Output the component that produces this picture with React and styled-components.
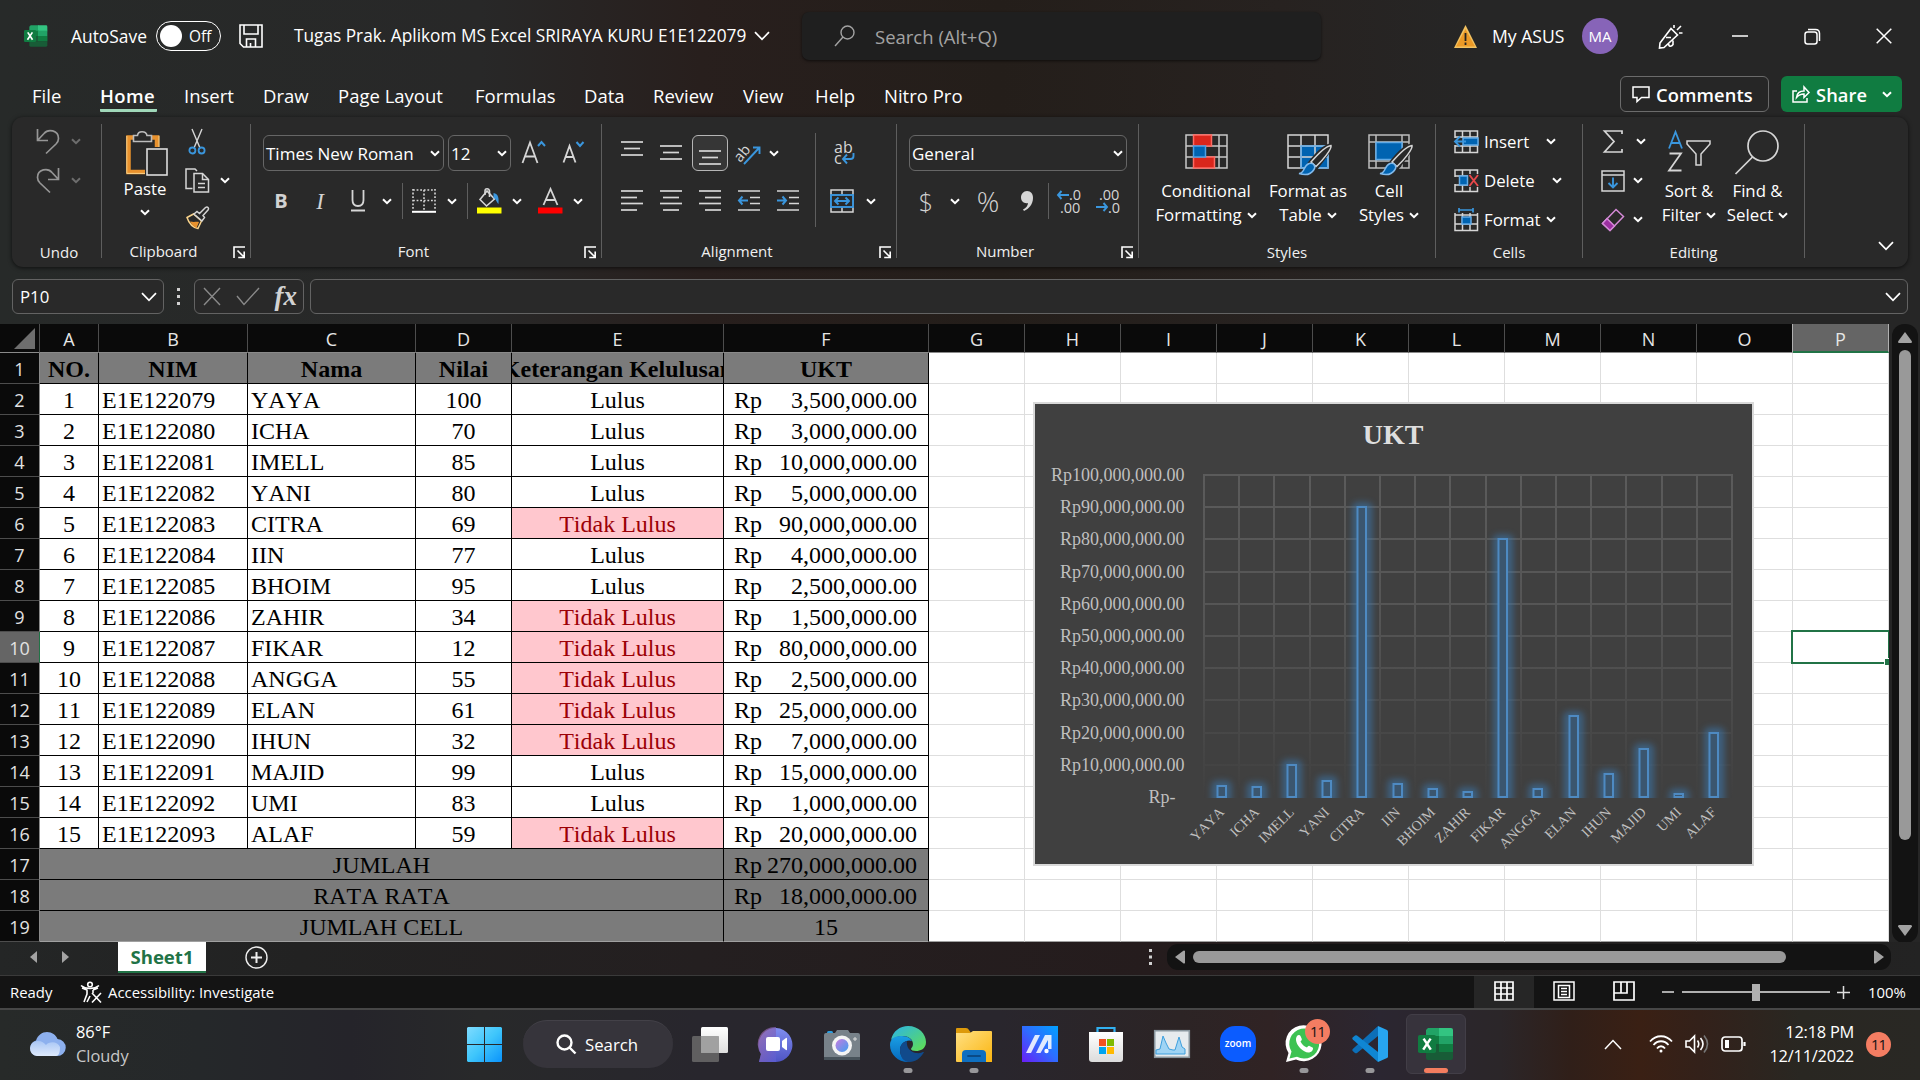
import React from "react";
import styled, { createGlobalStyle, css } from "styled-components";

const UI = `"Open Sans", "Noto Sans", sans-serif`;
const SERIF = `"Liberation Serif", "Times New Roman", serif`;

const Global = createGlobalStyle`
  html, body { margin: 0; padding: 0; background: #202020; }
  * { box-sizing: border-box; }
  svg { display: block; flex: none; overflow: visible; }
`;

const Screen = styled.div`
  width: 1920px;
  height: 1080px;
  overflow: hidden;
  display: flex;
  flex-direction: column;
  font-family: ${UI};
  font-size: 16.8px;
  color: #fff;
  background: linear-gradient(90deg, #272a29 0, #282828 480px, #281f1d 700px, #241e1a 1000px, #272220 1280px, #262626 1480px, #262626 100%);
`;

/* ---------- title bar ---------- */
const TitleBar = styled.header`
  height: 72px;
  display: flex;
  align-items: center;
  flex: none;
  white-space: nowrap;
`;
const Slot = styled.div`
  width: ${(p) => p.$w}px;
  height: ${(p) => (p.$h ? p.$h + "px" : "100%")};
  margin-left: ${(p) => p.$ml || 0}px;
  flex: none;
  display: flex;
  align-items: center;
  justify-content: ${(p) => (p.$start ? "flex-start" : "center")};
  white-space: nowrap;
`;
const TitleText = styled.div`
  width: ${(p) => p.$w}px;
  flex: none;
  font-size: ${(p) => p.$size || 17.25}px;
  line-height: 24px;
`;
const Toggle = styled.div`
  width: 65px;
  height: 30px;
  margin-left: 9px;
  border: 1.5px solid #fff;
  border-radius: 15px;
  display: flex;
  align-items: center;
  gap: 7px;
  padding-left: 3px;
  font-size: 15.4px;
`;
const Knob = styled.span`
  width: 22px;
  height: 22px;
  border-radius: 50%;
  background: #fff;
`;
const SearchBox = styled.div`
  width: 519px;
  height: 48px;
  margin-left: 32px;
  border-radius: 7px;
  background: #1f1f1f;
  box-shadow: 0 1px 3px rgba(0, 0, 0, 0.6);
  display: flex;
  align-items: center;
  padding-left: 32px;
  gap: 20px;
  font-size: 18.5px;
  color: #a3a3a3;
`;
const Avatar = styled.div`
  width: 36px;
  height: 36px;
  border-radius: 50%;
  background: #8764b8;
  display: flex;
  align-items: center;
  justify-content: center;
  font-size: 15px;
`;

/* ---------- tabs ---------- */
const TabRow = styled.nav`
  height: 45px;
  flex: none;
  display: flex;
  padding: 4px 18px 0 32px;
`;
const Tab = styled.div`
  width: ${(p) => p.$w}px;
  font-size: 18.5px;
  line-height: 40px;
  white-space: nowrap;
  ${(p) =>
    p.$active &&
    css`
      font-weight: 600;
      letter-spacing: 0.4px;
      span {
        display: block;
        width: 57px;
        height: 36px;
        border-bottom: 3px solid #a0d8b9;
        border-radius: 1px;
      }
    `}
`;
const Grow = styled.div`
  flex: 1;
`;
const CommentsButton = styled.button`
  width: 149px;
  height: 36px;
  border: 1px solid #6b6b6b;
  border-radius: 6px;
  background: transparent;
  color: #fff;
  font: 600 18.3px ${UI};
  letter-spacing: 0.1px;
  padding: 0 0 0 11px;
  display: flex;
  align-items: center;
  gap: 6px;
  white-space: nowrap;
`;
const ShareButton = styled(CommentsButton)`
  width: 121px;
  margin-left: 12px;
  border: 0;
  background: #107c41;
`;

/* ---------- ribbon ---------- */
const Ribbon = styled.section`
  height: 150px;
  margin: 0 12px;
  flex: none;
  display: flex;
  background: #292929;
  border-radius: 11px;
  box-shadow: 0 1px 4px rgba(0, 0, 0, 0.65);
`;
const Group = styled.div`
  width: ${(p) => p.$w}px;
  flex: none;
  display: flex;
  flex-direction: column;
`;
const Body = styled.div`
  height: 122px;
  display: flex;
  padding-left: ${(p) => p.$pl || 0}px;
`;
const Stack = styled.div`
  display: flex;
  flex-direction: column;
  flex: none;
  width: ${(p) => (p.$w ? p.$w + "px" : "auto")};
  padding-top: ${(p) => p.$pt || 0}px;
`;
const Line = styled.div`
  display: flex;
  align-items: center;
  height: ${(p) => p.$h || 39}px;
  margin-top: ${(p) => p.$mt || 0}px;
  padding-left: ${(p) => p.$pl || 0}px;
  gap: ${(p) => p.$gap || 0}px;
`;
const Caption = styled.div`
  height: 26px;
  display: flex;
  align-items: center;
  font-size: 15px;
  color: #f0f0f0;
  > span {
    flex: 1;
    text-align: center;
    padding-left: ${(p) => p.$pl || 0}px;
    padding-bottom: ${(p) => (p.$up ? 2 : 0)}px;
  }
`;
const LauncherSlot = styled.div`
  width: 25px;
  padding-left: 8px;
`;
const Divider = styled.div`
  width: 1px;
  height: 134px;
  margin-top: 7px;
  background: #5e5e5e;
  flex: none;
`;
const Bar = styled.i`
  width: 1px;
  height: ${(p) => p.$h}px;
  margin-top: ${(p) => p.$mt || 0}px;
  background: #5e5e5e;
`;
const Combo = styled.div`
  width: ${(p) => p.$w}px;
  height: 36px;
  border: 1px solid #666;
  border-radius: 6px;
  display: flex;
  align-items: center;
  justify-content: space-between;
  padding: 0 3px 0 2px;
  font-size: 17px;
`;
const BigButton = styled.div`
  width: ${(p) => p.$w}px;
  padding-top: ${(p) => p.$pt || 17}px;
  display: flex;
  flex-direction: column;
  align-items: center;
  line-height: 24px;
  white-space: nowrap;
`;
const IconBox = styled.div`
  height: 41px;
  margin-bottom: 4px;
  padding-left: ${(p) => p.$pl || 0}px;
`;
const TextRow = styled.div`
  display: flex;
  align-items: center;
  gap: 5px;
`;
const Pressed = styled.div`
  width: 36px;
  height: 36px;
  border: 1.3px solid #b5b5b5;
  border-radius: 6px;
  background: #363636;
  display: flex;
  align-items: center;
  justify-content: center;
  padding-top: 10px;
`;
const Glyph = styled.span`
  font-size: ${(p) => p.$s || 20}px;
  color: #d2d2d2;
  line-height: 1;
  font-weight: ${(p) => p.$b || 400};
  font-style: ${(p) => (p.$i ? "italic" : "normal")};
  font-family: ${(p) => (p.$serif ? SERIF : UI)};
`;

/* ---------- formula bar ---------- */
const FormulaBar = styled.div`
  height: 57px;
  flex: none;
  display: flex;
  align-items: flex-start;
  padding: 12px 12px 0 12px;
`;
const Field = styled.div`
  width: ${(p) => (p.$w ? p.$w + "px" : "auto")};
  flex: ${(p) => (p.$w ? "none" : 1)};
  height: 35px;
  border: 1px solid #636363;
  border-radius: 6px;
  background: #292929;
  display: flex;
  align-items: center;
  justify-content: space-between;
  padding: 0 6px 0 7px;
  font-size: 16.8px;
`;

/* ---------- sheet ---------- */
const COLS = "40px 59px 149px 168px 96px 212px 205px repeat(10, 96px)";
const Workbook = styled.main`
  display: flex;
  height: 618px;
  flex: none;
`;
const Sheet = styled.div`
  width: 1889px;
  position: relative;
  background: #fff;
`;
const HeadRow = styled.div`
  display: grid;
  grid-template-columns: ${COLS};
  grid-template-rows: 29px;
  height: 29px;
`;
const ColHead = styled.div`
  height: 29px;
  background: ${(p) => (p.$sel ? "#656565" : "#0a0a0a")};
  border-right: 1px solid ${(p) => (p.$edge ? "#b0b0b0" : "#4d4d4d")};
  border-bottom: ${(p) => (p.$sel ? "2px solid #217346" : "1px solid #8a8a8a")};
  padding-top: 2px;
  font-size: 18px;
  line-height: 26px;
  text-align: center;
  color: #e6e6e6;
`;
const Corner = styled(ColHead)`
  display: flex;
  justify-content: flex-end;
  align-items: flex-end;
  padding: 0 3px 3px 0;
`;
const GridRow = styled.div`
  display: grid;
  grid-template-columns: ${COLS};
  grid-template-rows: 31px;
  height: 31px;
`;
const RowHead = styled.div`
  height: 31px;
  background: ${(p) => (p.$sel ? "#656565" : "#0a0a0a")};
  border-right: 1px solid ${(p) => (p.$sel ? "#217346" : "#8a8a8a")};
  border-bottom: 1px solid #4d4d4d;
  padding-top: 3px;
  font-size: 18px;
  line-height: 27px;
  text-align: center;
  color: #e2e2e2;
`;
const Cell = styled.div`
  grid-column: span ${(p) => p.$span || 1};
  border-right: 1px solid #000;
  border-bottom: 1px solid ${(p) => (p.$last ? "#a0a0a0" : "#000")};
  padding: 2px 3px 0;
  height: 31px;
  line-height: 28px;
  font-family: ${SERIF};
  font-size: 24px;
  font-kerning: none;
  white-space: nowrap;
  overflow: hidden;
  display: flex;
  justify-content: ${(p) => (p.$left ? "flex-start" : "center")};
  color: ${(p) => (p.$bad ? "#9c0006" : "#000")};
  background: ${(p) => (p.$bad ? "#ffc7ce" : p.$gray ? "#7b7b7b" : "#fff")};
  font-weight: ${(p) => (p.$bold ? 700 : 400)};
`;
const Money = styled(Cell)`
  justify-content: space-between;
  padding: 2px 11px 0 10px;
`;
const Blank = styled.div`
  border-right: 1px solid #dedede;
  border-bottom: 1px solid ${(p) => (p.$last ? "#a0a0a0" : "#dedede")};
`;
const ChartFrame = styled.div`
  position: absolute;
  left: 1033px;
  top: 78px;
  width: 721px;
  height: 464px;
  border: 2px solid #d9d9d9;
  background: #404040;
`;
const Selection = styled.div`
  position: absolute;
  left: 1791px;
  top: 306px;
  width: 98px;
  height: 34px;
  border: 2px solid #217346;
  border-right-width: 1px;
`;
const Handle = styled.i`
  position: absolute;
  right: -1px;
  bottom: -3px;
  width: 5px;
  height: 7px;
  background: #217346;
  border-left: 1px solid #fff;
  border-top: 1px solid #fff;
`;
const VScroll = styled.div`
  width: 26px;
  height: 619px;
  margin-left: 3px;
  background: #131313;
  border-radius: 12px;
  display: flex;
  flex-direction: column;
  align-items: center;
  padding: 8px 0 7px;
`;
const VThumb = styled.div`
  width: 12px;
  height: 490px;
  margin: 7px 0 auto;
  border-radius: 6px;
  background: #999;
`;

/* ---------- sheet tabs + status ---------- */
const SheetBar = styled.div`
  height: 33px;
  flex: none;
  display: flex;
  align-items: center;
  padding-bottom: 3px;
  background: linear-gradient(90deg, #242626 0, #222 300px, #241f20 700px, #251c1d 1150px, #211e1e 1500px, #232323 100%);
`;
const SheetTab = styled.div`
  width: 88px;
  height: 31px;
  margin: 0 0 0 33px;
  background: #fff;
  border-bottom: 2px solid #217346;
  color: #217346;
  font-weight: 700;
  font-size: 18.6px;
  line-height: 29px;
  text-align: center;
`;
const HScroll = styled.div`
  width: 724px;
  height: 26px;
  margin-left: 14px;
  border-radius: 11px;
  background: #131313;
  display: flex;
  align-items: center;
  padding: 0 7px 0 8px;
`;
const HThumb = styled.div`
  width: 593px;
  height: 12px;
  margin: 0 auto 0 8px;
  border-radius: 6px;
  background: #999;
`;
const StatusBar = styled.div`
  height: 33px;
  flex: none;
  background: #141414;
  border-top: 1px solid #3a3a3a;
  display: flex;
  align-items: center;
  font-size: 14.9px;
`;
const ViewButton = styled.div`
  width: 60px;
  height: 32px;
  display: flex;
  align-items: center;
  justify-content: center;
  padding-bottom: 2px;
  background: ${(p) => (p.$on ? "#262626" : "transparent")};
`;
const Track = styled.div`
  width: 148px;
  height: 2px;
  margin: 0 7px 0 8px;
  background: #b0b0b0;
  display: flex;
  align-items: center;
  justify-content: center;
`;
const TrackThumb = styled.i`
  width: 8px;
  height: 17px;
  background: #b0b0b0;
  flex: none;
`;

/* ---------- taskbar ---------- */
const Taskbar = styled.footer`
  height: 72px;
  flex: none;
  border-top: 2px solid #474747;
  padding-bottom: 2px;
  display: flex;
  align-items: center;
  background: linear-gradient(90deg, #272a29 0, #25282a 200px, #25242a 350px, #28292a 480px, #28262d 700px, #29262d 1000px, #2c2425 1180px, #302324 1270px, #2b2631 1380px, #2b2629 1500px, #301f19 1570px, #3a2014 1640px, #33211a 1700px, #292722 1800px, #292824 100%);
`;
const Weather = styled.div`
  margin-left: 11px;
  width: 391px;
  font-size: 16.4px;
  line-height: 24px;
  div + div {
    color: #c8c8c8;
  }
`;
const Pill = styled.div`
  width: 150px;
  height: 48px;
  margin: 0 11px 0 21px;
  border-radius: 24px;
  background: #36343b;
  border-top: 1px solid #434148;
  display: flex;
  align-items: center;
  padding-left: 33px;
  gap: 8px;
  font-size: 16.8px;
`;
const TaskItem = styled.div`
  width: ${(p) => (p.$active ? 60 : 66)}px;
  height: 60px;
  margin: ${(p) => (p.$active ? "0 0 0 3px" : "0")};
  position: relative;
  flex: none;
  display: flex;
  align-items: center;
  justify-content: center;
  ${(p) =>
    p.$active &&
    css`
      background: #37333c;
      border: 1px solid #423e47;
      border-radius: 6px;
    `}
  &::after {
    content: "";
    position: absolute;
    bottom: ${(p) => (p.$active ? 0 : 1)}px;
    left: 50%;
    height: 5px;
    border-radius: 3px;
    transform: translateX(-50%);
    width: ${(p) => (p.$active ? 24 : p.$open ? 9 : 0)}px;
    background: ${(p) => (p.$active ? "#f47d5f" : "#98979a")};
  }
`;
const Badge = styled.span`
  width: 25px;
  height: 25px;
  border-radius: 50%;
  background: #f47d62;
  color: #111;
  font-size: 14.5px;
  line-height: 25px;
  text-align: center;
  letter-spacing: -0.7px;
  flex: none;
  ${(p) =>
    p.$over &&
    css`
      position: absolute;
      right: 7px;
      top: 5px;
    `}
`;
const Clock = styled.div`
  width: 90px;
  margin-left: 18px;
  margin-right: 12px;
  padding-bottom: 1px;
  text-align: right;
  font-size: 16.4px;
  line-height: 24px;
  white-space: nowrap;
  letter-spacing: -0.25px;
`;

/* ---------- icons ---------- */
const G = "#d6d6d6";
const B = "#3a96dd";
const Svg = ({ w, h, vb, children, s = G, sw = 1.5, ...r }) => (
  <svg width={w} height={h} viewBox={vb || `0 0 ${w} ${h}`} fill="none" stroke={s} strokeWidth={sw} {...r}>
    {children}
  </svg>
);
const Chev = ({ c = "#fff" }) => (
  <Svg w={10} h={7} s={c} sw={2}><path d="M1 1.2 5 5.2 9 1.2" /></Svg>
);
const BigChev = ({ c = "#fff" }) => (
  <Svg w={16} h={10} s={c} sw={1.7}><path d="M1 1.2 8 8.4 15 1.2" /></Svg>
);
const Launcher = () => (
  <Svg w={13} h={13} s="#fff" sw={1.6}><path d="M1 12V1h11M4.5 4.5l6 6M11.2 5.5v6h-6" /></Svg>
);
const ExcelLogo = ({ s }) => (
  <svg width={s} height={s} viewBox="0 0 36 36">
    <path d="M10 2h12v9H8V4z" fill="#21a366" />
    <path d="M21 2h12q2 0 2 2v7H21z" fill="#33c481" />
    <path d="M8 10h14v8H8z" fill="#107c41" />
    <path d="M21 10h14v8H21z" fill="#21a366" />
    <path d="M8 18h27v8H8z" fill="#185c37" />
    <path d="M21 18h14v8H21z" fill="#107c41" />
    <path d="M8 26h27v6q0 2-2 2H10q-2 0-2-2z" fill="#185c37" />
    <rect x="0" y="9" width="18" height="18" rx="1.8" fill="#107c41" />
    <path d="M5.6 12.6 12.8 23.6M12.6 12.6 5.2 23.6" stroke="#fff" strokeWidth="2.5" />
  </svg>
);
const Flip = styled.div`
  transform: scaleX(-1);
`;
const Undo = () => (
  <Svg w={24} h={25} s="#969696" sw={1.7}>
    <path d="M1.5 0v11.500H12M1.5 11.500 8 4.500C12-.5 22.500 1 22.500 9.500c0 2.500-1 4-2.500 5.500L10 24.500" />
  </Svg>
);
const PasteIcon = () => (
  <Svg w={42} h={46}>
    <path d="M8 7.500H2.500V42H19M26 7.500h5V17" stroke="#e8912d" strokeWidth="4.500" />
    <path d="M.8 6V43.400H19M33 5.800V17" stroke="#f9d38b" strokeWidth="1" />
    <path d="M7.500 11.500V5.500h4C12 .5 20 .5 21 5.500h4.500v6z" fill="#292929" stroke="#bdbdbd" strokeWidth="1.600" />
    <rect x="21" y="19" width="20" height="26" fill="#292929" stroke="#dcdcdc" strokeWidth="1.600" />
  </Svg>
);
const Cut = () => (
  <Svg w={18} h={26} sw={1.4}>
    <path d="M4 0l8 19M14 0 6 19" /><circle cx="4.400" cy="21.500" r="3" stroke={B} strokeWidth="1.800" /><circle cx="13.600" cy="21.500" r="3" stroke={B} strokeWidth="1.800" />
  </Svg>
);
const Copy = () => (
  <Svg w={25} h={25} sw={1.5}>
    <path d="M7.500 20.500H1V1h9l2 2" /><path d="M9 5.500h8.500l6 6V24H9z" /><path d="M17.500 5.500v6h6M13 15.500h7M13 19.500h7" />
  </Svg>
);
const Painter = () => (
  <Svg w={25} h={24} sw={1.5}>
    <path d="M2 11.500 8.500 8l8 7-3.500 7.500c-5-1-9-5-11-11z" stroke="#f9d38b" />
    <path d="M5 15.500c4 1 6 0 9 .5l-2.500 6C8.500 20.500 6.500 18.500 5 15.500z" fill="#e8912d" stroke="none" />
    <path d="M9 8l3-2.500 2.500 2 6-6c2-1.500 4 .5 2.500 2.500l-5 5.500 1.500 2-2.500 3.500z" fill="#292929" />
  </Svg>
);
const GrowA = ({ up }) => (
  <Svg w={26} h={28} sw={1.8}>
    {up ? <><path d="M1.500 24 9 3.500 16.500 24M4 17.500h10" /><path d="M17 7l3.500-4L24 7" stroke={B} strokeWidth="2" /></>
      : <><path d="M2.500 23.500 8.500 7l6 16.500M4.500 18h8" /><path d="M15.500 3 19 7l3.500-4" stroke={B} strokeWidth="2" /></>}
  </Svg>
);
const Borders = () => (
  <Svg w={24} h={24} sw={1.6}><path d="M1 0v20M23 0v20M1 1h22M12 1v20M1 11.500h22" strokeDasharray="1.800 1.800" /><path d="M0 22.800h24" stroke="#fff" strokeWidth="2" /></Svg>
);
const Bucket = () => (
  <Svg w={25} h={26} sw={1.6}><path d="M3 11.500 10 3l7.500 8L9.500 18z" /><path d="M8 7V3c0-3 4-3 4.500 0v6" /><path d="M16.500 5c5 1 5.500 5 5 11-2-2-3-6-5-6z" fill={B} stroke="none" /><path d="M0 22.500h24.500" stroke="#ff0" strokeWidth="6" /></Svg>
);
const FontColor = () => (
  <Svg w={25} h={26} sw={1.8}><path d="M5.500 17 12.500 1l7 16M8 12h9" /><path d="M0 22.500h24.500" stroke="#f00" strokeWidth="6" /></Svg>
);
const Lines = ({ rows, h = 22 }) => (
  <Svg w={22} h={h} sw={1.7}>{rows.map(([x, l, y]) => <path key={y} d={`M${x} ${y}h${l}`} />)}</Svg>
);
const vLines = [[0, 22, 1], [3, 16, 7.5], [0, 22, 14]];
const Indent = ({ out }) => (
  <Svg w={22} h={22} sw={1.7}><path d="M0 1h22M12 7.500h10M12 13.500h10M0 20h22" /><path d={out ? "M10 10.500H1M4.500 6.500 1 10.500l3.500 4" : "M0 10.500h9M5.500 6.500 9 10.500l-3.500 4"} stroke={B} strokeWidth="2" /></Svg>
);
const SvgText = styled.text`
  font-family: ${UI};
  font-size: ${(p) => p.$s}px;
  fill: ${(p) => p.$c || G};
  stroke: none;
`;
const Orient = () => (
  <Svg w={26} h={26}><SvgText $s={14.5} transform="rotate(-50 8 17)" x="1" y="18">ab</SvgText><path d="M8 24 23 8M17 7.500h6.500V14" stroke={B} strokeWidth="1.900" /></Svg>
);
const Wrap = () => (
  <Svg w={24} h={26}><SvgText $s={16} x="2" y="12.500">ab</SvgText><SvgText $s={16} x="2" y="24">c</SvgText><path d="M21.500 13v3q0 3-3 3H11M15 14.500 11 19l4 4.500" stroke={B} strokeWidth="1.900" /></Svg>
);
const Merge = () => (
  <Svg w={24} h={24}><path d="M1 1h22v22H1zM12 1v5M12 18v5" /><rect x="1" y="6" width="22" height="12" fill="#292929" stroke={B} strokeWidth="1.900" /><path d="M5 12h14M8.500 8.500 5 12l3.500 3.500M15.500 8.500 19 12l-3.500 3.500" stroke={B} strokeWidth="1.900" /></Svg>
);
const Decimal = ({ inc }) => (
  <Svg w={26} h={26}>
    <SvgText $s={14.5} x={inc ? 13 : 4} y="11.5">{inc ? ".0" : ".00"}</SvgText>
    <SvgText $s={14.5} x={inc ? 4 : 13} y="24.5">{inc ? ".00" : ".0"}</SvgText>
    <path d={inc ? "M13 7H2M5.500 3 2 7l3.500 4" : "M1 19h11M8.500 15l3.500 4-3.500 4"} stroke={B} strokeWidth="1.900" />
  </Svg>
);
const CondFmt = () => (
  <Svg w={43} h={35}>
    <path d="M1 1h41v33H1zM1 12h41M1 23h41M9 1v33M34 1v33" stroke="#c8c8c8" />
    <path d="M8.500 1h18v11h-18zM8.500 23h21v11h-21z" fill="#d9261c" stroke="#ff6a62" /><path d="M8.500 12h12v11h-12z" fill="#0063b1" stroke="#4aa0e6" />
  </Svg>
);
const BrushOver = () => (
  <>
    <path d="M23 29C30 20 37 13 43 11.500 46 12 36 25 29 34z" fill="#292929" stroke="#292929" strokeWidth="4" />
    <path d="M24 28C31 20 39 12 44 11.500 45 15 36 26 29 32.500z" fill="#292929" stroke="#d6d6d6" strokeWidth="1.500" />
    <path d="M12 39.500c6 0 4-8 10-10 5-1 7 3 5 6-3 5-9 6-15 4z" fill="#0063b1" stroke="#83bbec" strokeWidth="1.500" />
  </>
);
const FmtTable = () => (
  <Svg w={46} h={42}>
    <path d="M14 12h27v22H14z" fill="#0063b1" stroke="none" />
    <path d="M1 1h40v33H1zM1 12h40M1 23h40M14 1v33M28 1v33" /><path d="M14 12h27v22H14z" stroke="#62aae6" /><BrushOver />
  </Svg>
);
const CellStyles = () => (
  <Svg w={46} h={42}>
    <path d="M1 1h40v33H1zM8 1v33M34 1v33M1 8h40M1 27h40" stroke="#bdbdbd" /><path d="M8 8.500h26v17H8z" fill="#0063b1" stroke="#62aae6" /><BrushOver />
  </Svg>
);
const CellGrid = ({ kind }) => (
  <Svg w={25} h={24} sw={1.5}>
    <path d="M1 1h22.500v21.500H1zM1 7h22.500M1 16h22.500M8.500 1v21.500M16 1v21.500" />
    {kind === "ins" && <><path d="M0 8h13v7H0z" fill="#292929" stroke="none" /><path d="M9 8h15v7H9z" fill="#0063b1" stroke="#62aae6" /><path d="M12 11.500H1.500M6 6.500l-5 5 5 5" stroke={B} strokeWidth="1.900" /></>}
    {kind === "del" && <><path d="M14 5h11v13H14zM0 8h6v7H0z" fill="#292929" stroke="none" /><path d="M5.500 7h8v9h-8z" fill="#0063b1" stroke="#62aae6" /><path d="M15.500 6 24 17M24 6l-8.500 11" stroke="#e8484a" strokeWidth="1.900" /></>}
    {kind === "fmt" && <><path d="M0 0h25v5H0z" fill="#292929" stroke="none" /><path d="M5 2h14M5 0v4.500M19 0v4.500" stroke={B} strokeWidth="1.700" /><path d="M8 9h9v7H8z" fill="#0063b1" stroke="#62aae6" /></>}
  </Svg>
);
const Sigma = () => <Svg w={20} h={23} sw={1.7}><path d="M19 4V1H1.500L11 11.500 1.500 22H19v-3" /></Svg>;
const Fill = () => <Svg w={24} h={22}><path d="M1 1h22v20H1zM1 5h22" /><path d="M12 7.500v10M7.500 13l4.500 4.500 4.500-4.500" stroke={B} strokeWidth="1.900" /></Svg>;
const Eraser = () => <Svg w={24} h={24} s="#d58ad8"><path d="M1.500 15.500 15 1.500 22.500 8.500 9 22.500z" /><path d="M1.500 15.500 6 10.500l7.500 7.500L9 22.500z" fill="#9b2fa0" /></Svg>;
const SortIcon = () => (
  <Svg w={44} h={42} sw={1.8}><path d="M2 18.500 8.500 2 15 18.500M4 13h9" stroke={B} /><path d="M2.500 23.500H14L2 40.500h12.500" /><path d="M20 11h23v3l-9 10v11h-5V24l-9-10z" strokeWidth="1.500" /></Svg>
);
const FindIcon = () => <Svg w={45} h={45} sw={1.7}><circle cx="28" cy="16" r="15" /><path d="M17.500 27 .5 44" /></Svg>;

const Arrow = ({ d, c = "#a3a3a3", w = 11, h = 14 }) => <svg width={w} height={h} viewBox={`0 0 ${w} ${h}`}><path d={d} fill={c} /></svg>;

/* ---------- data ---------- */
const NAMES = ["YAYA", "ICHA", "IMELL", "YANI", "CITRA", "IIN", "BHOIM", "ZAHIR", "FIKAR", "ANGGA", "ELAN", "IHUN", "MAJID", "UMI", "ALAF"];
const SCORES = [100, 70, 85, 80, 69, 77, 95, 34, 12, 55, 61, 32, 99, 83, 59];
const UKT = [3.5, 3, 10, 5, 90, 4, 2.5, 1.5, 80, 2.5, 25, 7, 15, 1, 20];
const PASSED = [1, 1, 1, 1, 0, 1, 1, 0, 0, 0, 0, 0, 1, 1, 0];
const money = (m) => (m * 1e6).toLocaleString("en-US", { minimumFractionDigits: 2 });
const blanks = Array.from({ length: 10 }, (_, i) => i);
const TABS = [["File", 68], ["Home", 84], ["Insert", 79], ["Draw", 75], ["Page Layout", 137], ["Formulas", 109], ["Data", 69], ["Review", 90], ["View", 72], ["Help", 69], ["Nitro Pro", 100]];

/* ---------- chart ---------- */
const ChartText = styled.text`
  font-family: ${SERIF};
  font-size: ${(p) => p.$s || 18}px;
  font-weight: ${(p) => (p.$b ? 700 : 400)};
  font-kerning: none;
  fill: ${(p) => (p.$b ? "#dedede" : "#bfbfbf")};
  text-anchor: ${(p) => p.$a || "end"};
`;
const PX = 169, PY = 71, PW = 528, PH = 322;
function Chart() {
  const step = PW / 15;
  return (
    <svg width="717" height="460">
      <defs>
        <linearGradient id="fade" gradientUnits="userSpaceOnUse" x1="0" y1={PY} x2="0" y2={PY + PH}>
          <stop offset="0" stopColor="#5b5b5b" /><stop offset=".45" stopColor="#555" /><stop offset="1" stopColor="#404040" />
        </linearGradient>
        <filter id="glow" x="-200%" y="-60%" width="500%" height="220%"><feGaussianBlur stdDeviation="3" /></filter>
        <clipPath id="plot"><rect x="150" y="40" width="567" height={354} /></clipPath>
      </defs>
      <ChartText $s={28} $b $a="middle" x="358" y="40">UKT</ChartText>
      {Array.from({ length: 10 }, (_, i) => (
        <React.Fragment key={i}>
          <rect x={PX - 1} y={Math.round(PY + i * 32.2) - 1} width={PW + 2} height="2" fill="url(#fade)" />
          <ChartText x="149.5" y={PY + 6 + i * 32.2}>{`Rp${100 - i * 10},000,000.00`}</ChartText>
        </React.Fragment>
      ))}
      <ChartText x="140.500" y={PY + PH + 6}>Rp-</ChartText>
      {Array.from({ length: 16 }, (_, i) => (
        <rect key={i} x={Math.round(PX + i * step) - 1} y={PY - 1} width="2" height={PH} fill="url(#fade)" />
      ))}
      <g clipPath="url(#plot)">
        {UKT.map((v, i) => {
          const c = PX + step * (i + 0.5), h = v * 3.22;
          return <rect key={i} x={c - 10} y={PY + PH - h - 5} width="20" height={h + 14} rx="5" fill="#3a7fbc" opacity=".5" filter="url(#glow)" />;
        })}
      </g>
      {UKT.map((v, i) => {
        const c = Math.round(PX + step * (i + 0.5)) - 0.5, h = Math.max(3, Math.round(v * 3.22));
        return (
          <g key={i}>
            <rect x={c - 4} y={PY + PH - h} width="8.5" height={h} fill="#3b566f" stroke="#4e8ac2" strokeWidth="2" />
            <ChartText $s={14.2} transform={`rotate(-45 ${c + 3.5} 409)`} x={c + 3.5} y="409">{NAMES[i]}</ChartText>
          </g>
        );
      })}
    </svg>
  );
}

/* ---------- taskbar icons ---------- */
const Tb = ({ children, s = 36 }) => <svg width={s} height={s} viewBox="0 0 36 36">{children}</svg>;
const Grad = ({ id, a, b, v }) => <linearGradient id={id} x1="0" y1="0" x2={v ? 0 : 1} y2="1"><stop stopColor={a} /><stop offset="1" stopColor={b} /></linearGradient>;
const Start = () => <svg width="35" height="35"><defs><linearGradient id="win" gradientUnits="userSpaceOnUse" x1="0" y1="0" x2="35" y2="35"><stop stopColor="#7fdcff" /><stop offset=".5" stopColor="#3fc6fb" /><stop offset="1" stopColor="#0a93fb" /></linearGradient></defs><path d="M1 0h16v17H0V1zM18 0h16l1 1v16H18zM0 18h17v17H1l-1-1zM18 18h17v16l-1 1H18z" fill="url(#win)" /></svg>;
const TaskView = () => <Tb><defs><Grad id="tv" a="#fff" b="#dedede" v /></defs><rect x="9" y="1" width="27" height="26" rx="1.500" fill="url(#tv)" /><rect x="0" y="10" width="27" height="26" rx="1.500" fill="#6a6a6a" fillOpacity=".85" /><path d="M9 10h18v17H9z" fill="#aaa" fillOpacity=".8" /></Tb>;
const Chat = () => <Tb><defs><Grad id="ch" a="#a3659b" b="#5c5fd6" /><Grad id="ch2" a="#7f8df0" b="#4f54c4" v /></defs><path d="M1 36l2-8A17 17 0 1 1 18 36z" fill="url(#ch2)" /><path d="M1 36l2-8A17 17 0 0 1 18 1v35z" fill="url(#ch)" opacity=".7" /><rect x="8" y="11" width="14" height="14" rx="2" fill="#fff" /><path d="M24 15l4-3q1-.5 1 .5v11q0 1-1 .5l-4-3z" fill="#fff" /></Tb>;
const Camera = () => <Tb><defs><Grad id="cm" a="#c77be0" b="#3fa0f0" /></defs><rect x="3" y="5" width="6" height="4" rx="1.500" fill="#2b9fe0" /><path d="M11 7l2-3h11l2 3h8q2 0 2 2v23H0V9q0-2 2-2z" fill="#78828a" /><path d="M0 31h36v3H0z" fill="#48535b" /><circle cx="18" cy="19.500" r="10" fill="#f4f4f4" /><circle cx="18" cy="19.500" r="6.500" fill="url(#cm)" /><path d="M31 11v4M29 13h4" stroke="#ddd" /></Tb>;
const Edge = () => <Tb><defs><Grad id="e1" a="#2bb3ea" b="#62e04d" /><Grad id="e2" a="#1a9fe4" b="#0568bd" v /></defs><path d="M1 14C3 5 10 0 18 0c11 0 18 8 18 16 0 7-6 9-10 9-3 0-5-1-5-2 0-1 2-2 2-5 0-5-5-8-10-8C7 10 2 13 1 14z" fill="url(#e1)" /><path d="M0 19C0 12 6 9.500 12 10c6 0 9 3 10 5-5-2-12 2-12 9 0 6 4 10 10 12C9 37 0 29 0 19z" fill="url(#e2)" /><path d="M10 24c0-5 3-8 7-9-1 6 3 11 9 12 4 .5 6-.5 7-1 1 0 1 .5.500 1-3 5-8 9-14 9S10 31 10 24z" fill="#114a8b" /></Tb>;
const Folder = () => <Tb><defs><Grad id="fo" a="#ffe083" b="#fbb510" /></defs><path d="M0 3q0-1 1-1h9q2 0 3 2l2 3H0z" fill="#dd9a0b" /><path d="M0 7l14 0 3-2h18q1 0 1 1v30H1q-1 0-1-1z" fill="url(#fo)" /><path d="M6 36V28q0-4 4-4h16q4 0 4 4v8z" fill="#0f6fc0" /><path d="M12 30h12" stroke="#0a4a86" strokeWidth="1.800" strokeLinecap="round" /></Tb>;
const MyAsus = () => <Tb><defs><linearGradient id="as" x1="0" y1="1" x2="1" y2="0"><stop stopColor="#6a1df5" /><stop offset=".5" stopColor="#2f6bff" /><stop offset="1" stopColor="#00a2ff" /></linearGradient></defs><path d="M0 0h36v36H0z" fill="url(#as)" /><path d="M4 27 13 9h5L9 27zM14 27l9-18h6.500v14H26V14L18.500 27z" fill="#fff" fillOpacity=".85" /><circle cx="24.500" cy="25" r="2.200" fill="#fff" /></Tb>;
const Store = () => <Tb><defs><Grad id="st" a="#fff" b="#dcdcdc" v /></defs><path d="M9.500 7V2h17v5" fill="none" stroke="#31b0f0" strokeWidth="2.200" /><path d="M1 6h34v27q0 3-3 3H4q-3 0-3-3z" fill="url(#st)" /><path d="M11 13h7v7h-7z" fill="#f25022" /><path d="M19 13h7v7h-7z" fill="#7fba00" /><path d="M11 21h7v7h-7z" fill="#00a4ef" /><path d="M19 21h7v7h-7z" fill="#ffb900" /></Tb>;
const Perf = () => <Tb><rect x=".7" y="4.700" width="34.600" height="26.600" fill="#e6ebee" stroke="#8a979f" strokeWidth="1.600" /><path d="M2 24l4-1 3-13 3 7 3 6 4 1 2 0 4-13 3 10 3 2v5H2z" fill="#9fd4f4" stroke="#3d9fdd" strokeWidth="1" /></Tb>;
const ZoomLabel = styled.text`
  font: 600 10px ${UI};
  fill: #fff;
  text-anchor: middle;
`;
const Zoom = () => <Tb><rect width="36" height="36" rx="15" fill="#0b5cff" /><ZoomLabel x="18" y="20.500">zoom</ZoomLabel></Tb>;
const WhatsApp = () => <Tb><path d="M0 36l2.500-9A18 18 0 1 1 10 33.500z" fill="#fff" /><path d="M3.500 32.500l2-7A15 15 0 1 1 11 30.700z" fill="#3dc252" /><path d="M11 10c1-1.500 3-1.500 3.500 0l1.300 3c.3 1-.8 2-1.300 2.500 1.500 3 3.500 5 6.500 6 1-1 1.500-2 2.500-1.500l3 1.500c1 .5.500 2.500-.5 3.500-3 3-8 1-11.500-2.500S8.500 13.500 11 10z" fill="#fff" /></Tb>;
const VSCode = () => <Tb><path d="M26 0l9 4q1 .5 1 1.500v25q0 1-1 1.500l-9 4z" fill="#27a5f0" /><path d="M26 0v10L5 27q-1 .7-2 0L.7 25Q-.3 24 .8 23z" fill="#0c6fb8" /><path d="M26 36V26L5 9.500q-1-.7-2 0L.7 11.500q-1 1 .1 2z" fill="#0f86d3" /></Tb>;

export default function App() {
  return (
    <Screen>
      <Global />
      <TitleBar>
        <Slot $ml={24} $w={24}><ExcelLogo s={24} /></Slot>
        <Slot $ml={23} $w={76} $start><TitleText $w={76} $size={17.4}>AutoSave</TitleText></Slot>
        <Toggle><Knob />Off</Toggle>
        <Slot $ml={18} $w={24}>
          <Svg w={24} h={24} s="#fff" sw={1.6}><path d="M1 1h22v22H4.500L1 19.500zM5 1v9h14V1M7.500 23v-8h9v8M11.500 23v-4" /></Svg>
        </Slot>
        <Slot $ml={31} $w={460} $start><TitleText $w={460}>Tugas Prak. Aplikom MS Excel SRIRAYA KURU E1E122079</TitleText></Slot>
        <BigChev />
        <SearchBox>
          <Svg w={21} h={22} s="#a3a3a3" sw={1.4}><circle cx="13.500" cy="7.500" r="6.500" /><path d="M9 12 1 21" /></Svg>
          Search (Alt+Q)
        </SearchBox>
        <Slot $ml={133} $w={23}>
          <Svg w={23} h={23} s="none"><path d="M11.500 0 23 23H0z" fill="#f2c261" /><path d="M11.500 4 21 21.500H2z" fill="#ec9a27" /><path d="M11.500 8v8M11.500 17.500V20" stroke="#222" strokeWidth="1.800" /></Svg>
        </Slot>
        <Slot $ml={15} $w={75} $start><TitleText $w={75} $size={17.6}>My ASUS</TitleText></Slot>
        <Slot $ml={15} $w={36}><Avatar>MA</Avatar></Slot>
        <Slot $ml={40} $w={24}>
          <Svg w={25} h={25} s="#fff" sw={1.6}><path d="M2 19 13 4.500 19.500 11 6 23.500 1.500 24zM8 13.500l5 0M11 20c-1 2 2 3.500 4 .5l0-4M16 4V1M19 6l4-4M21 9h3.500" /></Svg>
        </Slot>
        <Slot $ml={50} $w={16}><Svg w={16} h={4} s="#fff"><path d="M0 2h16" /></Svg></Slot>
        <Slot $ml={56} $w={16}><Svg w={17} h={17} s="#fff"><rect x="1" y="4" width="12" height="12" rx="2.500" /><path d="M4 1.500h7.500q4 0 4 4V13" /></Svg></Slot>
        <Slot $ml={56} $w={16}><Svg w={16} h={16} s="#fff"><path d="M.7.700l14.600 14.600M15.300.700.700 15.300" /></Svg></Slot>
      </TitleBar>

      <TabRow>
        {TABS.map(([t, w]) => <Tab key={t} $w={w} $active={t === "Home"}><span>{t}</span></Tab>)}
        <Grow />
        <CommentsButton>
          <Svg w={18} h={17} s="#fff"><path d="M1 1h16v10.500H9.500L5 15.500v-4H1z" /></Svg>Comments
        </CommentsButton>
        <ShareButton>
          <Svg w={18} h={18} s="#fff"><path d="M5 6H1v11h14v-4M4.500 12.500C5 8 8 6 12 6V2l5 5.500-5 5v-3.500c-3 0-5 .5-7.500 3.500z" /></Svg>Share
          <Slot $ml={6} $w={16}><Chev /></Slot>
        </ShareButton>
      </TabRow>

      <Ribbon>
        <Group $w={89}>
          <Body $pl={22}>
            <Stack $pt={5}>
              <Line><Slot $w={28}><Undo /></Slot><Slot $w={28}><Chev c="#6d6d6d" /></Slot></Line>
              <Line><Slot $w={28}><Flip><Undo /></Flip></Slot><Slot $w={28}><Chev c="#6d6d6d" /></Slot></Line>
            </Stack>
          </Body>
          <Caption $pl={5}><span>Undo</span></Caption>
        </Group>
        <Divider />
        <Group $w={148}>
          <Body $pl={9}>
            <BigButton $w={68} $pt={13}><IconBox $pl={4}><PasteIcon /></IconBox><Line $h={28}>Paste</Line><Line $h={18}><Chev /></Line></BigButton>
            <Stack $pt={5}>
              <Line><Slot $w={36}><Cut /></Slot></Line>
              <Line><Slot $w={36}><Copy /></Slot><Slot $w={20}><Chev /></Slot></Line>
              <Line $h={36}><Slot $w={36}><Painter /></Slot></Line>
            </Stack>
          </Body>
          <Caption $up><span>Clipboard</span><LauncherSlot><Launcher /></LauncherSlot></Caption>
        </Group>
        <Divider />
        <Group $w={350}>
          <Body>
            <Stack $pt={18}>
              <Line $h={36} $pl={12} $gap={4}>
                <Combo $w={181}>Times New Roman<Chev /></Combo>
                <Combo $w={63}>12<Chev /></Combo>
                <Slot $w={38}><GrowA up /></Slot><Slot $w={34}><GrowA /></Slot>
              </Line>
              <Line $h={48} $mt={6} $pl={11}>
                <Slot $w={38}><Glyph $s={20} $b={700}>B</Glyph></Slot>
                <Slot $w={40}><Glyph $s={23} $i $serif>I</Glyph></Slot>
                <Slot $w={36}><Svg w={16} h={22} sw={1.8}><path d="M2.500 0v10q0 6 5.500 6t5.500-6V0M1 20.500h14" /></Svg></Slot>
                <Slot $w={22}><Chev /></Slot>
                <Slot $w={8}><Bar $h={36} /></Slot>
                <Slot $w={35}><Borders /></Slot>
                <Slot $w={22}><Chev /></Slot>
                <Slot $w={9}><Bar $h={36} /></Slot>
                <Slot $w={34}><Bucket /></Slot>
                <Slot $w={22}><Chev /></Slot>
                <Slot $w={44}><FontColor /></Slot>
                <Slot $w={12}><Chev /></Slot>
              </Line>
            </Stack>
          </Body>
          <Caption $up><span>Font</span><LauncherSlot><Launcher /></LauncherSlot></Caption>
        </Group>
        <Divider />
        <Group $w={294}>
          <Body>
            <Stack $pt={18} $w={213}>
              <Line $h={36} $pl={10}>
                <Slot $w={39}><Lines h={25} rows={vLines} /></Slot>
                <Slot $w={39}><Lines h={17} rows={vLines} /></Slot>
                <Slot $w={39}><Pressed><Lines h={16} rows={vLines} /></Pressed></Slot>
                <Slot $w={39}><Orient /></Slot>
                <Slot $w={12}><Chev /></Slot>
              </Line>
              <Line $h={48} $mt={6} $pl={10}>
                <Slot $w={39}><Lines rows={[[0, 22, 1], [0, 16, 7.5], [0, 22, 13.5], [0, 16, 20]]} /></Slot>
                <Slot $w={39}><Lines rows={[[0, 22, 1], [3, 16, 7.5], [0, 22, 13.5], [3, 16, 20]]} /></Slot>
                <Slot $w={39}><Lines rows={[[0, 22, 1], [6, 16, 7.5], [0, 22, 13.5], [6, 16, 20]]} /></Slot>
                <Slot $w={39}><Indent out /></Slot>
                <Slot $w={39}><Indent /></Slot>
              </Line>
            </Stack>
            <Bar $h={94} $mt={16} />
            <Stack $pt={18}>
              <Line $h={36}><Slot $w={56}><Wrap /></Slot></Line>
              <Line $h={48} $mt={6} $pl={6}><Slot $w={40}><Merge /></Slot><Slot $w={18}><Chev /></Slot></Line>
            </Stack>
          </Body>
          <Caption $up $pl={1}><span>Alignment</span><LauncherSlot><Launcher /></LauncherSlot></Caption>
        </Group>
        <Divider />
        <Group $w={241}>
          <Body>
            <Stack $pt={18}>
              <Line $h={36} $pl={12}><Combo $w={218}>General<Chev /></Combo></Line>
              <Line $h={48} $mt={6} $pl={14}>
                <Slot $w={30}><Glyph $s={25} $b={300}>$</Glyph></Slot>
                <Slot $w={28}><Chev /></Slot>
                <Slot $w={38}><Glyph $s={28} $b={300}>%</Glyph></Slot>
                <Slot $w={40}><svg width="12" height="20"><path d="M6 0c4 0 6 3 6 7 0 6-4 11-9 13l-1-1.500c3-1.500 5-4 5-6.500C3 13 0 10 0 6.500 0 3 2.500 0 6 0z" fill={G} /></svg></Slot>
                <Slot $w={3}><Bar $h={36} /></Slot>
                <Slot $w={38}><Decimal inc /></Slot>
                <Slot $w={40}><Decimal /></Slot>
              </Line>
            </Stack>
          </Body>
          <Caption $up><span>Number</span><LauncherSlot><Launcher /></LauncherSlot></Caption>
        </Group>
        <Divider />
        <Group $w={296}>
          <Body $pl={12}>
            <BigButton $w={110}><IconBox><CondFmt /></IconBox><TextRow>Conditional</TextRow><TextRow>Formatting<Chev /></TextRow></BigButton>
            <BigButton $w={94}><IconBox $pl={4}><FmtTable /></IconBox><TextRow>Format as</TextRow><TextRow>Table<Chev /></TextRow></BigButton>
            <BigButton $w={68}><IconBox $pl={4}><CellStyles /></IconBox><TextRow>Cell</TextRow><TextRow>Styles<Chev /></TextRow></BigButton>
          </Body>
          <Caption><span>Styles</span></Caption>
        </Group>
        <Divider />
        <Group $w={146}>
          <Body $pl={12}>
            <Stack $pt={5}>
              <Line><Slot $w={36}><CellGrid kind="ins" /></Slot><Slot $w={58} $start>Insert</Slot><Slot $w={18}><Chev /></Slot></Line>
              <Line><Slot $w={36}><CellGrid kind="del" /></Slot><Slot $w={64} $start>Delete</Slot><Slot $w={18}><Chev /></Slot></Line>
              <Line><Slot $w={36}><CellGrid kind="fmt" /></Slot><Slot $w={58} $start>Format</Slot><Slot $w={18}><Chev /></Slot></Line>
            </Stack>
          </Body>
          <Caption><span>Cells</span></Caption>
        </Group>
        <Divider />
        <Group $w={221}>
          <Body $pl={12}>
            <Stack $pt={5} $w={60}>
              <Line><Slot $w={36}><Sigma /></Slot><Slot $w={20}><Chev /></Slot></Line>
              <Line><Slot $w={36}><Fill /></Slot><Slot $w={14}><Chev /></Slot></Line>
              <Line><Slot $w={36}><Eraser /></Slot><Slot $w={14}><Chev /></Slot></Line>
            </Stack>
            <BigButton $w={68} $pt={13}><IconBox><SortIcon /></IconBox><Line $h={4} /><TextRow>Sort &amp;</TextRow><TextRow>Filter<Chev /></TextRow></BigButton>
            <BigButton $w={69} $pt={13}><IconBox><FindIcon /></IconBox><Line $h={4} /><TextRow>Find &amp;</TextRow><TextRow>Select<Chev /></TextRow></BigButton>
          </Body>
          <Caption><span>Editing</span></Caption>
        </Group>
        <Divider />
        <Group $w={91}><Line $h={28} $mt={115} $pl={73}><BigChev /></Line></Group>
      </Ribbon>

      <FormulaBar>
        <Field $w={152}>P10<BigChev /></Field>
        <Slot $w={30} $h={35}><Svg w={4} h={18} s="none"><path d="M0 0h3v3H0zM0 7h3v3H0zM0 14h3v3H0z" fill="#d0d0d0" /></Svg></Slot>
        <Field $w={110}>
          <Svg w={20} h={20} s="#8a8a8a" sw={1.4}><path d="M2 1l16 17M18 1 2 18" /></Svg>
          <Svg w={24} h={20} s="#8a8a8a" sw={1.4}><path d="M1 9l7 8.500L23 1" /></Svg>
          <Glyph $s={27} $i $serif $b={700}>fx</Glyph>
        </Field>
        <Slot $w={6} />
        <Field><i /><BigChev /></Field>
      </FormulaBar>

      <Workbook>
        <Sheet>
          <HeadRow>
            <Corner><Arrow w={22} h={21} d="M21 0v21H0z" c="#6e6e6e" /></Corner>
            {"ABCDEFGHIJKLMNOP".split("").map((c) => <ColHead key={c} $sel={c === "P"} $edge={c >= "O"}>{c}</ColHead>)}
          </HeadRow>
          <GridRow>
            <RowHead>1</RowHead>
            {["NO.", "NIM", "Nama", "Nilai", "Keterangan Kelulusan", "UKT"].map((h) => <Cell key={h} $gray $bold>{h}</Cell>)}
            {blanks.map((b) => <Blank key={b} />)}
          </GridRow>
          {NAMES.map((n, i) => (
            <GridRow key={n}>
              <RowHead $sel={i === 8}>{i + 2}</RowHead>
              <Cell>{i + 1}</Cell>
              <Cell $left>{`E1E1220${79 + i}`}</Cell>
              <Cell $left>{n}</Cell>
              <Cell>{SCORES[i]}</Cell>
              <Cell $bad={!PASSED[i]}>{PASSED[i] ? "Lulus" : "Tidak Lulus"}</Cell>
              <Money><span>Rp</span><span>{money(UKT[i])}</span></Money>
              {blanks.map((b) => <Blank key={b} />)}
            </GridRow>
          ))}
          {[["JUMLAH", 270], ["RATA RATA", 18], ["JUMLAH CELL", null]].map(([t, v], i) => (
            <GridRow key={t}>
              <RowHead>{17 + i}</RowHead>
              <Cell $span={5} $gray $last={i === 2}>{t}</Cell>
              {v ? <Money $gray><span>Rp</span><span>{money(v)}</span></Money> : <Cell $gray $last>15</Cell>}
              {blanks.map((b) => <Blank key={b} $last={i === 2} />)}
            </GridRow>
          ))}
          <ChartFrame><Chart /></ChartFrame>
          <Selection><Handle /></Selection>
        </Sheet>
        <VScroll>
          <Arrow w={14} h={11} d="M7 0l7 9.500q0 1.500-1 1.500H1q-1 0-1-1.500z" />
          <VThumb />
          <Arrow w={14} h={11} d="M7 11 14 1.500Q14 0 13 0H1Q0 0 0 1.500z" />
        </VScroll>
      </Workbook>

      <SheetBar>
        <Slot $ml={29} $w={8}><Arrow w={7} h={12} d="M7 0v12L0 6z" /></Slot>
        <Slot $ml={24} $w={8}><Arrow w={7} h={12} d="M0 0v12l7-6z" /></Slot>
        <Slot $ml={16} $w={0} />
        <SheetTab>Sheet1</SheetTab>
        <Slot $ml={39} $w={22}><Svg w={23} h={23} s="#eee" sw={1.4}><circle cx="11.500" cy="11.500" r="10.500" /><path d="M11.500 6v11M6 11.500h11" strokeWidth="2" /></Svg></Slot>
        <Grow />
        <Svg w={4} h={17} s="none"><path d="M0 0h3v3H0zM0 6.500h3v3H0zM0 13h3v3H0z" fill="#d0d0d0" /></Svg>
        <HScroll>
          <Arrow w={10} h={14} d="M10 1v12q-1 1-2 0L0 7l8-6q1-1 2 0z" />
          <HThumb />
          <Arrow w={10} h={14} d="M0 1v12q1 1 2 0l8-6-8-6Q1 0 0 1z" />
        </HScroll>
        <Slot $w={29} />
      </SheetBar>
      <StatusBar>
        <Slot $ml={10} $w={70} $start>Ready</Slot>
        <Slot $w={28} $start>
          <Svg w={22} h={22} s="#fff" sw={1.6}><circle cx="10" cy="3.500" r="2.300" /><path d="M1 4.500c5 4 13 4 18 0M2 7l5 2v4L4 21M13 9l5-2M13 9v3M7 21l3-6M12 12l9 9.500M21 12l-9 9.500" /></Svg>
        </Slot>
        <span>Accessibility: Investigate</span>
        <Grow />
        <ViewButton $on><Svg w={20} h={20} s="#fff" sw={1.7}><path d="M1 1h18v18H1zM1 7h18M1 13h18M7 1v18M13 1v18" /></Svg></ViewButton>
        <ViewButton><Svg w={22} h={20} s="#fff"><path d="M1 1h20v18H1zM5.500 4.500h11v12h-11zM8 7.500h6M8 10.500h6M8 13.500h6" /></Svg></ViewButton>
        <ViewButton><Svg w={22} h={20} s="#fff" sw={1.7}><path d="M1 1h20v18H1zM8 1v11M14 1v11h-13" /></Svg></ViewButton>
        <Slot $ml={8} $w={12}><Svg w={12} h={2} s="#ddd"><path d="M0 1h12" /></Svg></Slot>
        <Track><TrackThumb /></Track>
        <Slot $w={13}><Svg w={13} h={13} s="#ddd"><path d="M0 6.500h13M6.500 0v13" /></Svg></Slot>
        <Slot $ml={18} $w={52} $start>100%</Slot>
      </StatusBar>

      <Taskbar>
        <Slot $ml={29} $w={36}>
          <svg width="36" height="24"><defs><Grad id="cl" a="#a9c6f5" b="#dfeafc" v /></defs><path d="M8 24a8 8 0 0 1-1-15.500C9 3 13 0 18 0s9 3 10.500 7A8.500 8.500 0 0 1 28 24z" fill="#8db0ee" /><path d="M8 24a7.500 7.500 0 0 1 1-15c4 0 6 2 8 4 3-4 12-4 14 2 0 5-1 9-4 9z" fill="url(#cl)" /></svg>
        </Slot>
        <Weather><div>86°F</div><div>Cloudy</div></Weather>
        <Start />
        <Pill>
          <Svg w={21} h={21} s="#fff" sw={2.4}><circle cx="8.500" cy="8.500" r="7" /><path d="M13.500 13.500l6 6" /></Svg>Search
        </Pill>
        <Slot $w={0} $ml={-7} />
        <TaskItem><TaskView /></TaskItem>
        <TaskItem><Chat /></TaskItem>
        <TaskItem><Camera /></TaskItem>
        <TaskItem $open><Edge /></TaskItem>
        <TaskItem $open><Folder /></TaskItem>
        <TaskItem><MyAsus /></TaskItem>
        <TaskItem><Store /></TaskItem>
        <TaskItem><Perf /></TaskItem>
        <TaskItem><Zoom /></TaskItem>
        <TaskItem $open><WhatsApp /><Badge $over>11</Badge></TaskItem>
        <TaskItem $open><VSCode /></TaskItem>
        <TaskItem $active><ExcelLogo s={36} /></TaskItem>
        <Grow />
        <Svg w={18} h={11} s="#fff" sw={1.5}><path d="M1 10 9 1.500 17 10" /></Svg>
        <Slot $ml={27} $w={24}><Svg w={24} h={18} s="#fff" sw={1.8}><path d="M1 6.500c6-7 16-7 22 0M4.500 10c4-5 11-5 15 0M8 13.500c2-3 6-3 8 0" /><circle cx="12" cy="16" r="1.500" fill="#fff" stroke="none" /></Svg></Slot>
        <Slot $ml={12} $w={24}><Svg w={24} h={20} s="#fff" sw={1.6}><path d="M1 7v6h3.500l5 5V2l-5 5zM12.500 6.500q2.500 3.500 0 7M15.500 4q5 6 0 12" /><path d="M19 1.500q7 8.500 0 17" stroke="#777" /></Svg></Slot>
        <Slot $ml={11} $w={26}><Svg w={25} h={16} s="#fff" sw={1.7}><rect x="1" y="1" width="20" height="14" rx="3" /><path d="M4 4h4v8H4z" fill="#fff" stroke="none" /><path d="M23.500 6v4" strokeWidth="2.200" /></Svg></Slot>
        <Clock><div>12:18 PM</div><div>12/11/2022</div></Clock>
        <Badge>11</Badge>
        <Slot $w={29} />
      </Taskbar>
    </Screen>
  );
}
